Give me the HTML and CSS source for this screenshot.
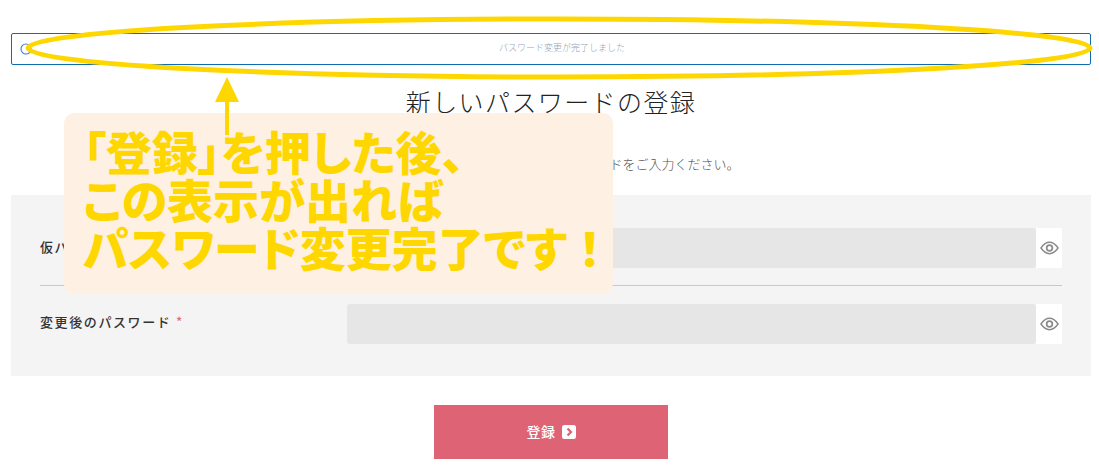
FILE: index.html
```html
<!DOCTYPE html>
<html lang="ja">
<head>
<meta charset="utf-8">
<title>新しいパスワードの登録</title>
<link rel="stylesheet" href="styles.css">
</head>
<body>
<main class="page">
  <div class="alert">
    <svg class="alert-icon" viewBox="0 0 12 12"><circle cx="6" cy="6" r="5" fill="none" stroke="#3f80cf" stroke-width="1.1"/></svg>
    <p class="alert-text">パスワード変更が完了しました</p>
  </div>
  <h1 class="title">新しいパスワードの登録</h1>
  <p class="lead">メールの仮パスワードと変更後のパスワードをご入力ください。</p>
  <form class="panel">
    <div class="row row-first">
      <label class="label">仮パスワード <span class="req">*</span></label>
      <div class="field">
        <div class="input"></div>
        <div class="eye"><svg viewBox="0 0 20 14"><path d="M1 7C4 2.8 7 1 10 1s6 1.800 9 6c-3 4.200-6 6-9 6s-6-1.800-9-6z" fill="none" stroke="#8a8a8a" stroke-width="1.500"/><circle cx="10" cy="7" r="3" fill="none" stroke="#8a8a8a" stroke-width="1.800"/></svg></div>
      </div>
    </div>
    <div class="row">
      <label class="label">変更後のパスワード <span class="req">*</span></label>
      <div class="field">
        <div class="input"></div>
        <div class="eye"><svg viewBox="0 0 20 14"><path d="M1 7C4 2.8 7 1 10 1s6 1.800 9 6c-3 4.200-6 6-9 6s-6-1.800-9-6z" fill="none" stroke="#8a8a8a" stroke-width="1.500"/><circle cx="10" cy="7" r="3" fill="none" stroke="#8a8a8a" stroke-width="1.800"/></svg></div>
      </div>
    </div>
  </form>
  <div class="actions">
    <button class="submit" type="button"><span class="submit-text">登録</span>
      <svg class="submit-icon" viewBox="0 0 14 14"><rect width="14" height="14" rx="2.500" fill="#fff"/><path d="M5.500 3.500L9 7l-3.500 3.500" fill="none" stroke="#dd6375" stroke-width="2.200"/></svg>
    </button>
  </div>
</main>

<svg class="ring" viewBox="0 0 1099 100"><ellipse cx="559" cy="48" rx="531" ry="29" fill="none" stroke="#ffd700" stroke-width="5"/></svg>
<div class="note">
  <p>「登録」を押した後、</p>
  <p>この表示が出れば</p>
  <p>パスワード変更完了です<span class="bang">！</span></p>
</div>
<svg class="arrow" viewBox="0 0 26 60"><path d="M13 0L25 25H15V58H11V25H1z" fill="#ffd700"/></svg>
</body>
</html>
```
FILE: styles.css
```css
* { box-sizing: border-box; }
html, body { margin: 0; padding: 0; }
body {
  position: relative;
  height: 475px;
  overflow: hidden;
  background: #fff;
  font-family: "Noto Sans CJK JP", "Noto Sans", sans-serif;
  color: #333;
}
.page { padding: 33px 8px 0 11px; }
.alert {
  display: flex;
  align-items: center;
  height: 32px;
  border: 1px solid #0f6cb0;
  border-radius: 2px;
  padding-left: 8px;
}
.alert-icon { width: 12px; height: 12px; flex: none; }
.alert-text {
  flex: 1;
  margin: 0;
  text-align: center;
  font-size: 9px;
  line-height: 12px;
  font-weight: 300;
  color: #8f9fb8;
  padding: 0 0 2px 2px;
}
.title {
  margin: 18px 0 0;
  text-align: center;
  font-size: 25px;
  line-height: 36px;
  font-weight: 300;
  letter-spacing: 1.4px;
  color: #222;
}
.lead {
  margin: 36px 0 0;
  text-align: center;
  font-size: 13px;
  line-height: 18px;
  font-weight: 300;
  color: #555;
}
.panel {
  margin-top: 22px;
  height: 181px;
  padding: 33px 29px 0;
  background: #f4f4f4;
}
.row {
  display: flex;
  padding-top: 18px;
}
.row-first {
  padding: 0 0 17px;
  border-bottom: 1px solid #c8c8c8;
}
.label {
  width: 307px;
  flex: none;
  padding-top: 8px;
  font-size: 13px;
  line-height: 20px;
  font-weight: 500;
  letter-spacing: 1.6px;
  color: #333;
}
.row-first .label { padding-top: 9px; }
.req { color: #e0707f; font-size: 13px; }
.field { flex: 1; display: flex; }
.input {
  flex: 1;
  height: 40px;
  background: #e6e6e6;
  border-radius: 3px;
}
.eye {
  width: 26px;
  display: flex;
  align-items: center;
  justify-content: flex-end;
  background: #fff;
  padding-right: 3px;
}
.eye svg { width: 19px; height: 14px; }
.actions { display: flex; justify-content: center; margin-top: 29px; }
.submit {
  display: flex;
  align-items: center;
  justify-content: center;
  gap: 6px;
  width: 234px;
  height: 54px;
  border: 0;
  padding: 0 0 1px;
  background: #dd6375;
  color: #fff;
  font: 500 14px/20px "Noto Sans CJK JP", sans-serif;
  letter-spacing: .5px;
}
.submit-text { padding-bottom: 2px; }
.submit-icon { width: 14px; height: 14px; }

/* Annotation layered over the page */
.ring { position: absolute; left: 0; top: 0; width: 1099px; height: 100px; }
.arrow { position: absolute; left: 214px; top: 77px; width: 26px; height: 60px; }
.note {
  position: absolute;
  left: 64px;
  top: 113px;
  width: 549px;
  height: 181px;
  padding: 13px 0 0 19px;
  background: #fef0e3;
  border-radius: 10px;
  font-size: 46px;
  line-height: 48px;
  font-weight: 900;
  font-feature-settings: "palt";
  color: #ffd700;
  white-space: nowrap;
}
.note p { margin: 0; }
.bang { font-feature-settings: normal; }
```
